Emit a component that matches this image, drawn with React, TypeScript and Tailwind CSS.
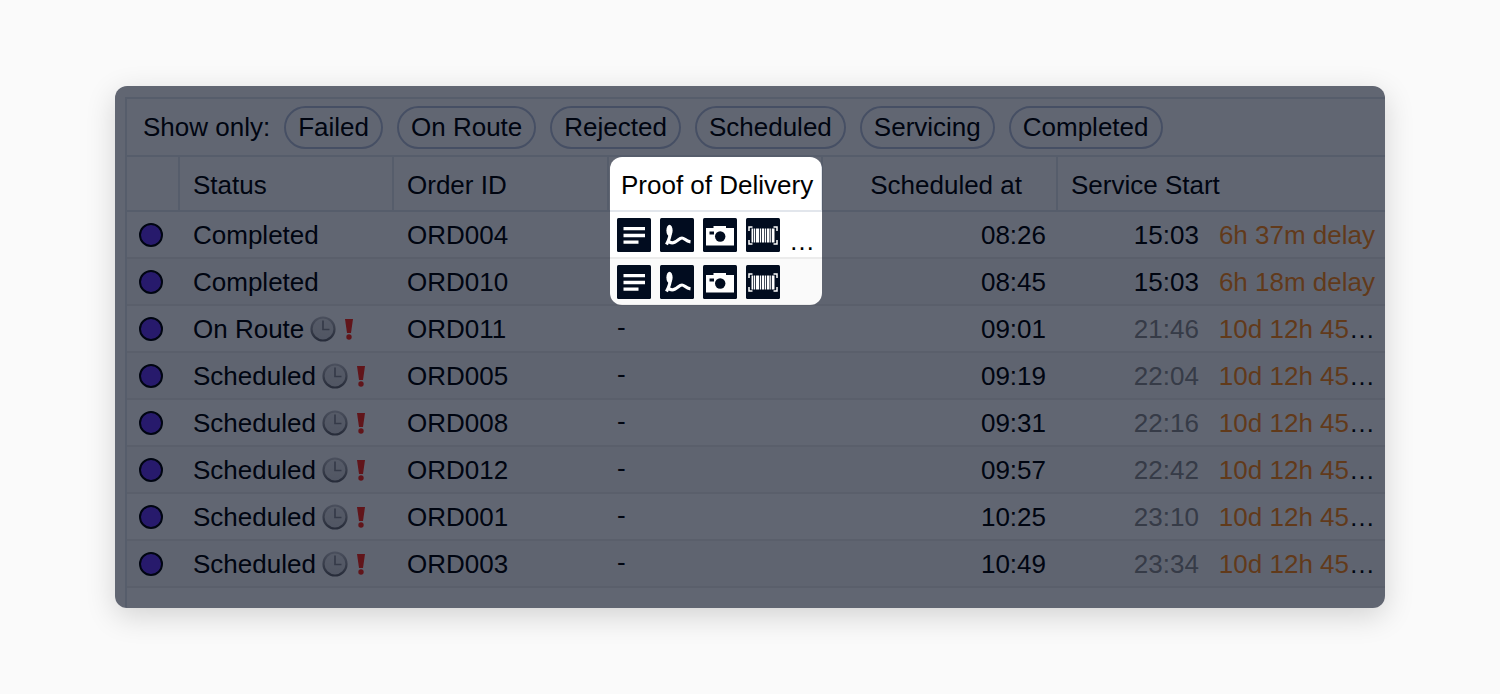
const filters = ["Failed", "On Route", "Rejected", "Scheduled", "Servicing", "Completed"];

type Order = {
  status: string;
  id: string;
  proof?: boolean;
  more?: boolean;
  scheduled: string;
  start: string;
  delay: string;
};

const orders: Order[] = [
  { status: "Completed", id: "ORD004", proof: true, more: true, scheduled: "08:26", start: "15:03", delay: "6h 37m delay" },
  { status: "Completed", id: "ORD010", proof: true, scheduled: "08:45", start: "15:03", delay: "6h 18m delay" },
  { status: "On Route", id: "ORD011", scheduled: "09:01", start: "21:46", delay: "10d 12h 45" },
  { status: "Scheduled", id: "ORD005", scheduled: "09:19", start: "22:04", delay: "10d 12h 45" },
  { status: "Scheduled", id: "ORD008", scheduled: "09:31", start: "22:16", delay: "10d 12h 45" },
  { status: "Scheduled", id: "ORD012", scheduled: "09:57", start: "22:42", delay: "10d 12h 45" },
  { status: "Scheduled", id: "ORD001", scheduled: "10:25", start: "23:10", delay: "10d 12h 45" },
  { status: "Scheduled", id: "ORD003", scheduled: "10:49", start: "23:34", delay: "10d 12h 45" },
];

function NoteIcon() {
  return (
    <svg viewBox="0 0 34 34" className="size-[34px]" aria-hidden="true">
      <rect width="34" height="34" rx="1.5" fill="#010c1f" />
      <path d="M6.5 10.7h21.5M6.5 17.5h21.5M6.5 24.2h15" stroke="#fff" strokeWidth="3.3" />
    </svg>
  );
}

function SignatureIcon() {
  return (
    <svg viewBox="0 0 34 34" className="size-[34px]" aria-hidden="true">
      <rect width="34" height="34" rx="1.5" fill="#010c1f" />
      <ellipse cx="9.5" cy="12.5" rx="3.1" ry="5.8" fill="#fff" />
      <path
        d="M10 14C10.6 18 9.5 21 6.5 26.5M8 22.5C10 25 12.5 25.3 15 24C18 22.5 19.5 20 22 20C24.5 20 25.5 23.2 30.5 23.8"
        fill="none"
        stroke="#fff"
        strokeWidth="3.2"
        strokeLinejoin="round"
      />
    </svg>
  );
}

function CameraIcon() {
  return (
    <svg viewBox="0 0 34 34" className="size-[34px]" aria-hidden="true">
      <rect width="34" height="34" rx="1.5" fill="#010c1f" />
      <path d="M3 10h7.5V8H23v2h8v17.500H3z" fill="#fff" />
      <circle cx="17.2" cy="18.5" r="5.2" fill="#010c1f" />
      <path d="M6.5 13.5H11v3H6.5z" fill="#010c1f" />
    </svg>
  );
}

function BarcodeIcon() {
  return (
    <svg viewBox="0 0 34 34" className="size-[34px]" aria-hidden="true">
      <rect width="34" height="34" rx="1.5" fill="#010c1f" />
      <path d="M6.5 9H3v4M27.5 9H31v4M6.5 26H3v-4M27.5 26H31v-4" fill="none" stroke="#fff" strokeWidth="1.5" />
      <path
        d="M5.5 10.5h1.8v14H5.500zM8 10.500h1.200v14H8zM10 10.500h3v14h-3zM13.800 10.500h1.200v14h-1.200zM15.800 10.500h2.500v14h-2.500zM19 10.500h1.200v14H19zM21 10.500h2.500v14H21zM24.200 10.500h1v14h-1zM26 10.500h2.500v14H26z"
        fill="#fff"
      />
    </svg>
  );
}

function ClockIcon() {
  return (
    <svg viewBox="0 0 26 26" className="size-[26px]" role="img" aria-label="Late">
      <defs>
        <linearGradient id="clock-face" x1="0" y1="0" x2="0" y2="1">
          <stop offset="0" stopColor="#e2e2e4" />
          <stop offset="1" stopColor="#d4d4d7" />
        </linearGradient>
        <linearGradient id="clock-rim" x1="0" y1="0" x2="0" y2="1">
          <stop offset="0" stopColor="#c0c0c4" />
          <stop offset="1" stopColor="#68686c" />
        </linearGradient>
      </defs>
      <circle cx="13" cy="13" r="11.5" fill="url(#clock-face)" stroke="url(#clock-rim)" strokeWidth="2.2" />
      <path d="M13 4.5v9h6.5" fill="none" stroke="#8c8c92" strokeWidth="1.7" />
    </svg>
  );
}

function AlertIcon() {
  return (
    <svg viewBox="0 0 10 24" className="h-6 w-[10px]" role="img" aria-label="Alert">
      <path d="M1 2h8L7 16H3z" fill="#ff2a1a" />
      <circle cx="5" cy="20" r="2.7" fill="#ff2a1a" />
    </svg>
  );
}

function ProofCell({ order }: { order: Order }) {
  if (!order.proof) return <div className="px-2 pb-1">-</div>;
  return (
    <div className="flex h-[45px] items-center gap-[9px] pl-2">
      <NoteIcon />
      <SignatureIcon />
      <CameraIcon />
      <BarcodeIcon />
      {order.more && <span className="pt-3">…</span>}
    </div>
  );
}

export default function App() {
  return (
    <div className="flex min-h-screen items-center bg-[#fafafa] px-[115px] font-['Liberation_Sans',Arial,sans-serif] text-[26px] leading-[30px] text-black">
      <main className="w-full overflow-hidden rounded-xl bg-white pt-[11px] pl-[10px] shadow-[0_8px_30px_rgba(0,0,0,0.16)]">
        <div className="border-t-2 border-l-2 border-[#e2e6ec] pb-5">
          <div className="flex h-[56px] items-center gap-[14px] pl-4">
            <span>Show only:</span>
            {filters.map((name) => (
              <button key={name} className="h-[43px] rounded-full border-2 border-[#b9c3d9] px-3">
                {name}
              </button>
            ))}
          </div>
          <table className="w-full table-fixed border-separate border-spacing-0 text-left">
            <colgroup>
              <col className="w-[53px]" />
              <col className="w-[214px]" />
              <col className="w-[215px]" />
              <col className="w-[214px]" />
              <col className="w-[235px]" />
              <col />
            </colgroup>
            <thead>
              <tr className="h-[57px] *:border-t-2 *:border-b-2 *:border-[#e2e6ec] *:p-0 *:pt-[3px] *:font-normal">
                <th className="border-r-2" aria-label="Marker" />
                <th className="border-r-2">
                  <span className="pl-[13px]">Status</span>
                </th>
                <th className="border-r-2">
                  <span className="pl-[13px]">Order ID</span>
                </th>
                <th className="relative border-r-2">
                  <span className="pl-3 whitespace-nowrap">Proof of Delivery</span>
                  {/* spotlight: the spread shadow dims everything around this box */}
                  <div className="pointer-events-none absolute top-0 left-px z-10 h-[148px] w-[212px] rounded-xl shadow-[0_0_0_2000px_rgba(0,8,27,0.62)]" />
                </th>
                <th className="border-r-2 text-right">
                  <span className="pr-[34px]">Scheduled at</span>
                </th>
                <th>
                  <span className="pl-[13px]">Service Start</span>
                </th>
              </tr>
            </thead>
            <tbody>
              {orders.map((order) => (
                <tr key={order.id} className="h-[47px] even:bg-[#fafafa] *:border-b-2 *:border-[#ececec] *:p-0">
                  <td>
                    <div className="ml-3 size-6 rounded-full border-2 border-black bg-[#6838f0]" />
                  </td>
                  <td>
                    <div className="flex items-center pl-[13px]">
                      {order.status}
                      {!order.proof && (
                        <span className="ml-1.5 flex items-center gap-2">
                          <ClockIcon />
                          <AlertIcon />
                        </span>
                      )}
                    </div>
                  </td>
                  <td>
                    <span className="pl-[13px]">{order.id}</span>
                  </td>
                  <td>
                    <ProofCell order={order} />
                  </td>
                  <td className="text-right">
                    <span className="pr-3">{order.scheduled}</span>
                  </td>
                  <td>
                    <div className="flex justify-end gap-5 pr-[10px] whitespace-nowrap">
                      <span className={order.proof ? "" : "text-[#8e8e8e]"}>{order.start}</span>
                      <span>
                        <span className="text-[#ff8c1a]">{order.delay}</span>
                        {!order.proof && "…"}
                      </span>
                    </div>
                  </td>
                </tr>
              ))}
            </tbody>
          </table>
        </div>
      </main>
    </div>
  );
}
